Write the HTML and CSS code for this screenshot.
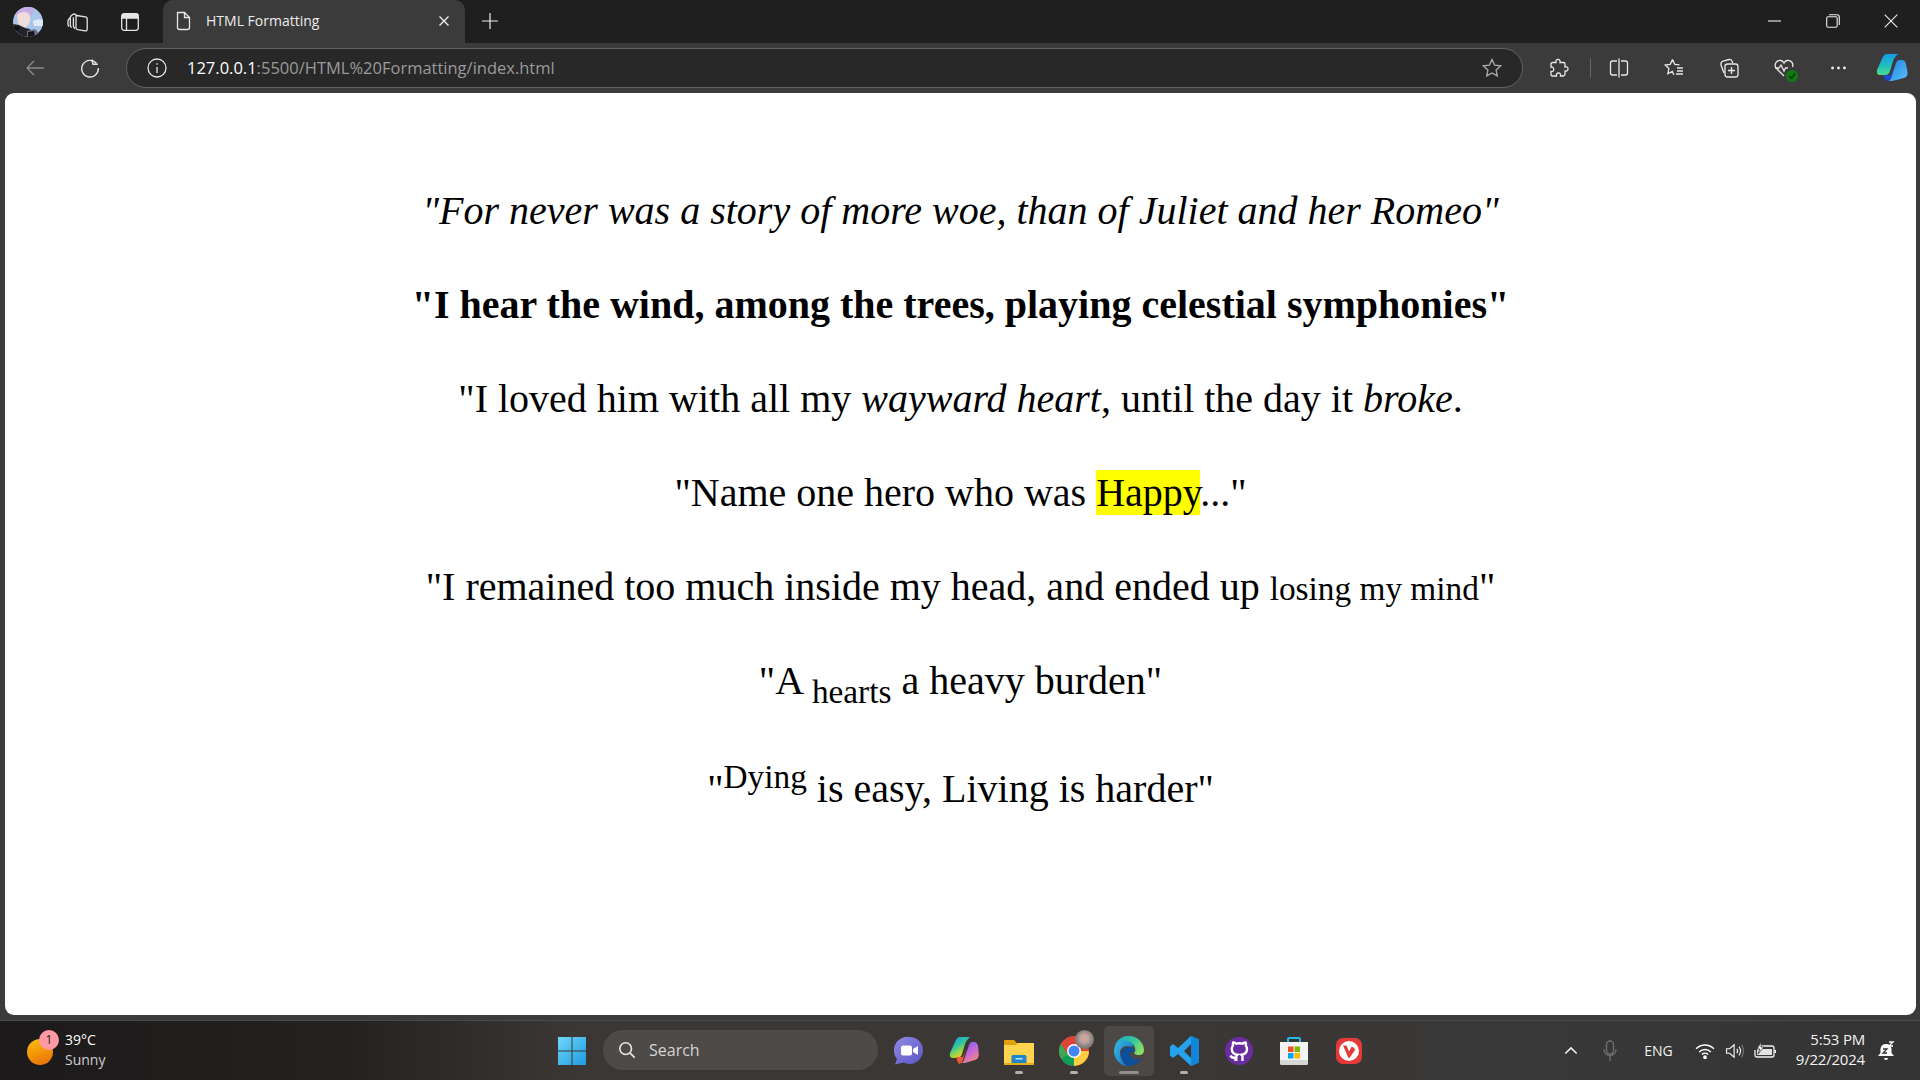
FILE: index.html
```html
<!DOCTYPE html>
<html lang="en">
<head>
<meta charset="utf-8">
<title>HTML Formatting</title>
<link rel="stylesheet" href="styles.css">
</head>
<body>
<div class="window">
  <header class="tabbar">
    <svg class="avatar" viewBox="0 0 30 30"><defs><clipPath id="avc"><circle cx="15" cy="15" r="15"/></clipPath></defs><g clip-path="url(#avc)"><rect width="30" height="30" fill="#a9c6ea"/><path d="M0 0h22q-2 6-4 9H0z" fill="#c3aee6"/><path d="M4 8q5-5 11-2 3 3 2 8-1 5-5 6-5 0-7-4z" fill="#f0dcd9"/><path d="M20 14q5-3 10-1v6h-9z" fill="#dfeaf6"/><path d="M0 17l6 1 6 3 5 1 4 8H0z" fill="#23232c"/><path d="M0 19l7 1-1 3H0z" fill="#101015"/><path d="M14 24l8-2 8 8H14z" fill="#6a7486"/><path d="M15 25l6-1 1 6h-7z" fill="#15151b"/></g></svg>
    <svg viewBox="0 0 21 20" class="ico tb-first"><path d="M9.500 3.500l9 1.300q1.700.3 1.700 2V17q0 2-2 1.800l-7.500-1.100q-1.700-.3-1.700-2V5.200q0-1.900.5-1.700z"/><path d="M6.400 5.200V14q0 1.500 1.600 2.600M9.500 3.500L8 2.200Q6.800 1.700 5.700 2.600L4 4Q3.300 4.700 3.300 5.800V13q0 1.500 1.300 2.500M5.700 2.600"/><path d="M3.300 5.800L1.700 7.200Q1 7.900 1 9v3.500q0 1.300 1.200 2"/></svg>
    <svg viewBox="0 0 18 18" class="ico tb-second"><rect x=".7" y=".7" width="16.600" height="16.600" rx="2.500"/><path d="M5.500 5v12.300"/><path d="M1.500 1.500h15V5h-15z" fill="#e6e6e6"/></svg>
    <div class="tab">
      <svg viewBox="0 0 16 20" class="tab-page"><path d="M2.500 1.500h7l5 5v10q0 2-2 2h-8q-2 0-2-2v-13q0-2 0-2z"/><path d="M9.500 1.500v5h5"/></svg>
      <span class="tab-title">HTML Formatting</span>
      <svg viewBox="0 0 12 12" class="tab-x"><path d="M1.500 1.500l9 9M10.500 1.500l-9 9"/></svg>
    </div>
    <svg viewBox="0 0 16 16" class="tab-new"><path d="M8 0v16M0 8h16"/></svg>
    <div class="winctl">
      <svg viewBox="0 0 14 14" class="wc"><path d="M0 7h13"/></svg>
      <svg viewBox="0 0 14 14" class="wc"><rect x=".7" y="2.700" width="10.500" height="10.500" rx="1.500"/><path d="M3 .7h8q2.300 0 2.300 2.300v8"/></svg>
      <svg viewBox="0 0 14 14" class="wc"><path d="M.7.700l12.600 12.600M13.300.700L.7 13.300"/></svg>
    </div>
  </header>

  <nav class="toolbar">
    <svg viewBox="0 0 20 20" class="nav-ico nav-back"><path d="M19 10H2M9 3l-7 7 7 7"/></svg>
    <svg viewBox="0 0 20 20" class="nav-ico nav-reload"><path d="M16.500 5.500A8.300 8.300 0 1 0 18.300 10"/><path d="M12 1.500l1 4.800h4.800"/></svg>
    <div class="address">
      <svg viewBox="0 0 20 20" class="addr-info"><circle cx="10" cy="10" r="9"/><path d="M10 9v6M10 5.200v1.500"/></svg>
      <span class="url"><b>127.0.0.1</b>:5500/HTML%20Formatting/index.html</span>
      <svg viewBox="0 0 20 20" class="addr-star"><path d="M10 1.500l2.600 5.600 6 .7-4.500 4.100 1.200 6L10 15l-5.300 2.900 1.200-6L1.400 7.800l6-.7z"/></svg>
    </div>
    <div class="tools">
      <svg viewBox="0 0 20 20" class="tool tool-ext"><path d="M8 1.500q2.500-.7 3 1.500.2 1 0 1.500h3.500q1.500 0 1.500 1.500v3q1-.5 2 0 1.500 1 .7 3-.7 1.500-2.700 1v3q0 1.500-1.500 2h-3q.5-3-2-3t-2 3h-4Q2 18 2 16.500v-3q2.500.5 2.700-2T2 9V6q0-1.500 1.500-1.500H7q-.5-2.200 1-3z"/></svg>
      <span class="tool-sep"></span>
      <svg viewBox="0 0 20 20" class="tool"><path d="M8 3H3.500Q1.500 3 1.500 5v10q0 2 2 2H8M12 3h4.500q2 0 2 2v10q0 2-2 2H12M10 .5v19"/></svg>
      <svg viewBox="0 0 20 20" class="tool"><path d="M8.500 1.500l2.300 4.800 4.700.6M8.500 1.500L6.200 6.300l-5 .7 3.700 3.500-1 5.200 4.400-2.400 1.600 3.600M13 10h6M13 13h6M12 16h7"/></svg>
      <svg viewBox="0 0 20 20" class="tool"><path d="M5 15l-3-8Q1.500 4 4 3l6-1.500q2-.4 3 1.500l.8 2"/><rect x="6" y="6" width="13" height="13" rx="2.500"/><path d="M12.500 9v7M9 12.500h7"/></svg>
      <span class="tool-wrap"><svg viewBox="0 0 20 20" class="tool"><path d="M10 18L2.500 10.500Q0 7.500 2 4.500 4 1.800 7 2.500 9 3 10 5q1-2 3-2.500 3-.7 5 2 1.500 2 .5 4.500M1 10h4l2-3 3 6 1.500-3H14"/></svg><span class="health"><svg viewBox="0 0 10 10"><path d="M2.500 5l2 2 3-4"/></svg></span></span>
      <svg viewBox="0 0 20 6" class="tool tool-dots"><circle cx="3" cy="3" r="1.700"/><circle cx="10" cy="3" r="1.700"/><circle cx="17" cy="3" r="1.700"/></svg>
      <svg viewBox="0 0 32 30" class="copilot"><defs><linearGradient id="cp1" x1="0" y1="0" x2="0" y2="1"><stop offset="0" stop-color="#139ae8"/><stop offset=".55" stop-color="#1fbfc0"/><stop offset="1" stop-color="#4cdc8e"/></linearGradient><linearGradient id="cp2" x1="0" y1="0" x2="1" y2="1"><stop offset="0" stop-color="#1b7fe0"/><stop offset="1" stop-color="#5cc0f8"/></linearGradient></defs><path d="M11 1h11l-2 2q-2 2-3 5l-3 10q-1 4-5 4H4q-4 0-3-5L6 6q2-5 5-5z" fill="url(#cp1)"/><path d="M11 28q3 0 4-3l5-15q1-3 3-3h3q3 0 4 4l1.500 8q.5 5-3.500 6l-12 3z" fill="url(#cp2)"/><path d="M7 22h7q1.500 0 1-1l3-7-3 11q-1 3-4 3-3-2-4-6z" fill="#1f45cf"/></svg>
    </div>
  </nav>

  <main class="page">
    <p><i>"For never was a story of more woe, than of Juliet and her Romeo"</i></p>
    <p><b>"I hear the wind, among the trees, playing celestial symphonies"</b></p>
    <p>"I loved him with all my <em>wayward heart</em>, until the day it <em>broke</em>.</p>
    <p>"Name one hero who was <mark>Happy</mark>..."</p>
    <p>"I remained too much inside my head, and ended up <small>losing my mind</small>"</p>
    <p>"A <sub>hearts</sub> a heavy burden"</p>
    <p>"<sup>Dying</sup> is easy, Living is harder"</p>
  </main>

  <footer class="taskbar">
    <div class="tb-left">
      <span class="weather-ico"><span class="weather-badge">1</span></span>
      <div class="weather-text"><span class="temp">39°C</span><span class="cond">Sunny</span></div>
    </div>
    <div class="tb-center">
      <svg viewBox="0 0 30 30" class="start"><defs><linearGradient id="win" x1="0" y1="0" x2="1" y2="1"><stop offset="0" stop-color="#6fd6f7"/><stop offset="1" stop-color="#1f9be0"/></linearGradient></defs><path d="M1 1h13.500v13.500H1zM15.500 1H29v13.500H15.500zM1 15.500h13.500V29H1zM15.500 15.500H29V29H15.500z" fill="url(#win)"/></svg>
      <div class="search">
        <svg viewBox="0 0 20 20" class="search-ico"><circle cx="8.500" cy="8.500" r="6.500"/><path d="M13.500 13.500l5 5"/></svg>
        <span>Search</span>
      </div>
      <div class="apps">
        <span class="app"><svg viewBox="0 0 30 30"><defs><linearGradient id="teams" x1="0" y1="0" x2="1" y2="1"><stop offset="0" stop-color="#8f8ae6"/><stop offset="1" stop-color="#5a55c4"/></linearGradient></defs><path d="M15.500 1a13.500 13.500 0 1 1-6 25.600L1 28.500 3 23A13.500 13.500 0 0 1 15.500 1z" fill="url(#teams)"/><rect x="7" y="9.500" width="11" height="10" rx="2" fill="#fff"/><path d="M19 13l5-3v9l-5-3z" fill="#fff"/></svg></span>
        <span class="app"><svg viewBox="0 0 30 30"><defs><linearGradient id="cpa" x1="0" y1="0" x2=".6" y2="1"><stop offset="0" stop-color="#1e9be8"/><stop offset=".45" stop-color="#2cc4a4"/><stop offset=".75" stop-color="#a8d63c"/><stop offset="1" stop-color="#f6c12f"/></linearGradient><linearGradient id="cpb" x1=".2" y1="0" x2=".8" y2="1"><stop offset="0" stop-color="#6a5fe8"/><stop offset=".5" stop-color="#c468dc"/><stop offset="1" stop-color="#f68a6c"/></linearGradient></defs><path d="M11 1h10l-2 2q-2 2-3 5l-3 10q-1 4-5 4H4q-4 0-3-5L6 6q2-5 5-5z" fill="url(#cpa)"/><path d="M11 27q3 0 4-3l5-15q1-3 3-3h2q3 0 4 4l.8 8q.2 5-3.800 6l-10 3z" fill="url(#cpb)"/><path d="M7 21h6q1 0 1.500-1.500L17 13l-3 11q-1 3-4 4-2-3-3-7z" fill="#ee5a32"/></svg></span>
        <span class="app app-run"><svg viewBox="0 0 30 30"><path d="M0 5q0-1 1-1h9l3 3h17v4H0z" fill="#e0a10c"/><path d="M0 9h12l2-2h16v22H0z" fill="#ffd34e"/><path d="M9 19h12q1.500 0 1.500 1.500V27h-15v-6.500Q7.500 19 9 19z" fill="#1f86c9"/><path d="M11.500 22h7v1.500h-7z" fill="#bfe3f7"/><path d="M0 27h30v2H0z" fill="#e9ad1b"/></svg></span>
        <span class="app app-run"><svg viewBox="0 0 30 30"><circle cx="15" cy="15" r="15" fill="#db4437"/><path d="M15 15L2 22.500A15 15 0 0 0 15 30z" fill="#0f9d58"/><path d="M15 15v15A15 15 0 0 0 30 15z" fill="#ffcd40"/><path d="M2 7.500A15 15 0 0 0 2 22.500L9 19z" fill="#3aa757"/><circle cx="15" cy="15" r="7" fill="#fff"/><circle cx="15" cy="15" r="5.500" fill="#4285f4"/></svg><span class="chrome-profile"></span></span>
        <span class="app app-active"><svg viewBox="0 0 30 30"><defs><linearGradient id="ed" x1="0" y1="0" x2="1" y2="1"><stop offset="0" stop-color="#3cc0ea"/><stop offset="1" stop-color="#0f69b8"/></linearGradient><linearGradient id="ed2" x1="0" y1=".2" x2="1" y2=".6"><stop offset="0" stop-color="#1fa6c8"/><stop offset=".6" stop-color="#39c89a"/><stop offset="1" stop-color="#8fe05c"/></linearGradient></defs><path d="M0 15A15 15 0 0 1 15 0q8 8 2 11-8-3-11 4-1 8 7 15A15 15 0 0 1 0 15z" fill="url(#ed)"/><path d="M1 9Q5 0 15 0a15 15 0 0 1 15 14q0 5-5 5-4 0-5-2 2-2 1-5C18 2 5 3 1 9z" fill="url(#ed2)"/><path d="M13 30q-7-5-6-13 2-6 8-6 5 0 6 5-3-1-5 .5-2 3 3 6 5 2 9 0-6 8-15 7.500z" fill="#0d4f9a"/></svg></span>
        <span class="app app-run"><svg viewBox="0 0 30 30"><path d="M22 0l8 3.500v23L22 30 9 18l-5 4-3-2.500v-9L4 8l5 4zM22 8l-7 7 7 7z" fill="#25a2ee"/><path d="M22 0l8 3.500v23L22 30z" fill="#1186d8"/></svg></span>
        <span class="app"><svg viewBox="0 0 30 30"><circle cx="15" cy="15" r="14" fill="#6a2d9f"/><path d="M11.500 25v-3.500q-4 .8-5-2M18.500 25v-4q0-1.500-1-2.300c3-.4 5.500-1.800 5.500-6 0-1.300-.5-2.300-1.200-3.200.2-.9.200-2-.2-3-1.200 0-2.300.6-3.200 1.200a11 11 0 0 0-6 0c-.9-.6-2-1.200-3.200-1.200-.4 1-.4 2.100-.2 3-.7.900-1.200 1.900-1.200 3.200 0 4.200 2.500 5.600 5.500 6-1 .8-1 1.800-1 2.300V25" fill="none" stroke="#fff" stroke-width="2.400"/></svg></span>
        <span class="app"><svg viewBox="0 0 30 30"><path d="M9 8V3q0-1 1-1h10q1 0 1 1v5" fill="none" stroke="#25b8e8" stroke-width="2"/><path d="M1 6h28v21q0 2-2 2H3q-2 0-2-2z" fill="#f3f3f3"/><path d="M1 24h28v3q0 2-2 2H3q-2 0-2-2z" fill="#d6d6d6"/><rect x="9" y="10.500" width="5.500" height="5.500" fill="#f25022"/><rect x="15.500" y="10.500" width="5.500" height="5.500" fill="#7fba00"/><rect x="9" y="17" width="5.500" height="5.500" fill="#00a4ef"/><rect x="15.500" y="17" width="5.500" height="5.500" fill="#ffb900"/></svg></span>
        <span class="app"><svg viewBox="0 0 30 30"><rect x="2" y="2" width="26" height="26" rx="7" fill="#e53a3a"/><circle cx="15" cy="15" r="10" fill="#fff"/><path d="M9 9.500h3.500l2.500 6 2.500-4.500a3 3 0 0 1 3.500 3L15.500 22h-1z" fill="#e53a3a"/></svg></span>
      </div>
    </div>
    <div class="tb-right">
      <svg viewBox="0 0 16 10" class="tray-chev"><path d="M1.500 8.500L8 2l6.500 6.500"/></svg>
      <svg viewBox="0 0 14 22" class="tray-mic"><rect x="3.500" y="1" width="7" height="13" rx="3.500"/><path d="M1 9.500a6 6 0 0 0 12 0M7 16v5"/></svg>
      <span class="tray-lang">ENG</span>
      <svg viewBox="0 0 22 18" class="tray-wifi"><path d="M1 6.500a14 14 0 0 1 20 0M4.500 10a9 9 0 0 1 13 0M7.500 13a5 5 0 0 1 7 0"/><circle cx="11" cy="16" r="1.300" fill="#fff"/></svg>
      <svg viewBox="0 0 22 18" class="tray-vol"><path d="M1.500 6.500h3.500L10 2v14l-5-4.500H1.500zM13 6.500q2 2.500 0 5M15.500 4q3.500 5 0 10"/><path d="M18.500 2q4 7 0 14" stroke="#777"/></svg>
      <svg viewBox="0 0 22 18" class="tray-bat"><path d="M7 4h11q2 0 2 2v7q0 2-2 2H3q-2 0-2-2V8M21.500 8v3"/><rect x="3" y="7" width="15" height="6" fill="#e2e2e2" stroke="none"/><path d="M7 0L3 7h3L4 12l6-7H7z" fill="#fff" stroke="#333" stroke-width=".8"/></svg>
      <div class="clock"><span>5:53 PM</span><span>9/22/2024</span></div>
      <svg viewBox="0 0 18 20" class="tray-bell"><path d="M9 3q5 0 5.500 5v4l2.500 3H1l2.500-3V8Q4 3 9 3zM7 17h4q0 2-2 2t-2-2z" fill="#fff"/><path d="M6 8h4l-4 4h4" fill="none" stroke="#333" stroke-width="1.300"/><path d="M12 1h4l-4 4h4" fill="none" stroke="#fff" stroke-width="1.300"/></svg>
    </div>
  </footer>
</div>
</body>
</html>
```

FILE: styles.css
```css
* { box-sizing: border-box; }
html, body { margin: 0; padding: 0; height: 100%; overflow: hidden; }
body { font-family: "Open Sans", "Noto Sans", sans-serif; background: #3b3b3b; }
svg { display: block; flex: none; }
.window { display: flex; flex-direction: column; height: 1080px; }

/* Tab strip */
.tabbar { height: 43px; background: #1f1f1f; display: flex; align-items: center; padding-left: 13px; flex: none; }
.avatar { width: 30px; height: 30px; }
.ico { fill: none; stroke: #e6e6e6; stroke-width: 1.300; }
.tb-first { width: 21px; height: 20px; margin-left: 24px; }
.tb-second { width: 18px; height: 18px; margin-left: 33px; }
.tab { width: 302px; height: 43px; margin-left: 24px; align-self: flex-end; background: #3b3b3b; border-radius: 10px 10px 0 0; display: flex; align-items: center; padding: 0 15px 2px 12px; }
.tab-page { width: 16px; height: 20px; fill: none; stroke: #e8e8e8; stroke-width: 1.300; }
.tab-title { color: #ececec; font-size: 14px; margin-left: 15px; flex: 1; }
.tab-x { width: 12px; height: 12px; fill: none; stroke: #f0f0f0; stroke-width: 1.300; }
.tab-new { width: 16px; height: 16px; fill: none; stroke: #eee; stroke-width: 1.200; margin-left: 17px; margin-bottom: 1px; }
.winctl { margin-left: auto; display: flex; gap: 44px; padding-right: 22px; margin-bottom: 1px; }
.wc { width: 14px; height: 14px; fill: none; stroke: #eee; stroke-width: 1.100; }

/* Toolbar */
.toolbar { height: 50px; background: #3b3b3b; display: flex; align-items: center; flex: none; padding-left: 25px; }
.nav-ico { width: 20px; height: 20px; fill: none; stroke-width: 1.400; }
.nav-back { stroke: #8b8b8b; }
.nav-reload { stroke: #e6e6e6; margin-left: 35px; }
.address { width: 1397px; height: 40px; margin-left: 26px; margin-top: -1px; border: 1.500px solid #626262; border-radius: 20px; background: #282828; display: flex; align-items: center; padding: 0 20px; }
.addr-info { width: 20px; height: 20px; fill: none; stroke: #e6e6e6; stroke-width: 1.300; }
.url { flex: 1; margin-left: 20px; font-size: 16.500px; color: #9a9a9a; }
.url b { font-weight: 400; color: #fff; }
.addr-star { width: 20px; height: 20px; fill: none; stroke: #aaa; stroke-width: 1.300; }
.tools { display: flex; align-items: center; padding-left: 26px; }
.tool { width: 20px; height: 20px; fill: none; stroke: #e8e8e8; stroke-width: 1.300; }
.tools > .tool { margin-right: 35px; }
.tools > .tool-ext { margin-right: 0; }
.tool-sep { width: 1px; height: 20px; background: #666; margin: 0 18px 0 21px; }
.tool-wrap { position: relative; margin-right: 36px; }
.health { position: absolute; right: -4px; bottom: -4px; width: 12px; height: 12px; border-radius: 50%; background: #107c10; }
.health svg { width: 12px; height: 12px; fill: none; stroke: #0b3d0b; stroke-width: 1.500; }
.tools > .tool-dots { width: 17px; height: 6px; fill: #e8e8e8; stroke: none; margin-right: 29px; }
.copilot { width: 32px; height: 30px; }

/* Page */
.page { flex: 1; margin: 0 4px 0 5px; background: #fff; border-radius: 9px; padding: 94px 0 0; font-family: "Liberation Serif", "Times New Roman", serif; font-size: 40px; color: #000; text-align: center; overflow: hidden; }
.page p { margin: 0 0 47px; }
.page mark { background: #ff0; color: #000; }

/* Taskbar */
.taskbar { height: 60px; margin-top: 5px; flex: none; border-top: 1px solid #4a4a4a; background: linear-gradient(90deg, #1c1a1a 0, #242120 18%, #3b3734 30%, #3a3734 60%, #383838 80%, #343434 100%); display: flex; align-items: center; color: #fff; }
.tb-left { width: 556px; display: flex; align-items: center; padding-left: 27px; flex: none; }
.weather-ico { position: relative; width: 26px; height: 26px; border-radius: 50%; background: linear-gradient(160deg, #fdc10a, #e86a06); margin-top: 2px; }
.weather-badge { position: absolute; top: -9px; left: 12px; width: 20px; height: 20px; border-radius: 50%; background: #ff99a4; color: #1a1a1a; font-size: 12px; line-height: 20px; text-align: center; }
.weather-text { display: flex; flex-direction: column; margin: -2px 0 0 12px; font-size: 14px; line-height: 20px; }
.temp { color: #fff; }
.cond { color: #cfcfcf; }
.tb-center { display: flex; align-items: center; flex: none; }
.start { width: 30px; height: 30px; margin-left: 1px; }
.search { width: 275px; height: 40px; margin-left: 16px; margin-top: -1px; border-radius: 20px; background: #4d4a48; display: flex; align-items: center; padding-left: 15px; font-size: 16px; color: #d4d4d4; }
.search-ico { width: 18px; height: 18px; fill: none; stroke: #e8e8e8; stroke-width: 1.800; margin-right: 13px; }
.apps { display: flex; margin-left: 3px; }
.app { position: relative; width: 55px; height: 50px; display: flex; align-items: center; justify-content: center; isolation: isolate; }
.app svg { width: 30px; height: 30px; }
.app-run::after, .app-active::after { content: ""; position: absolute; bottom: 2px; left: 50%; transform: translateX(-50%); width: 8px; height: 3px; border-radius: 2px; background: #b0b0b0; }
.app-active::before { content: ""; position: absolute; inset: 0 2.500px; background: #4b4846; border-radius: 5px; z-index: -1; }
.app-active::after { width: 20px; background: #8e8e8e; }
.chrome-profile { position: absolute; top: 4px; right: 7px; width: 19px; height: 19px; border-radius: 50%; background: radial-gradient(circle at 50% 45%, #c9a69e 0 25%, #8a8583 55%, #5f5c5a 100%); }
.tb-right { margin-left: auto; display: flex; align-items: center; padding-right: 25px; }
.tray-chev { width: 14px; height: 9px; fill: none; stroke: #f2f2f2; stroke-width: 1.800; }
.tray-mic { width: 14px; height: 22px; fill: none; stroke: #6e6e6e; stroke-width: 1.400; margin-left: 25px; }
.tray-lang { font-size: 14px; color: #f0f0f0; margin-left: 27px; }
.tray-wifi { width: 20px; height: 16px; fill: none; stroke: #fff; stroke-width: 1.600; margin-left: 22px; }
.tray-vol { width: 20px; height: 16px; fill: none; stroke: #f2f2f2; stroke-width: 1.300; margin-left: 10px; }
.tray-bat { width: 22px; height: 18px; fill: none; stroke: #f2f2f2; stroke-width: 1.300; margin-left: 9px; }
.clock { display: flex; flex-direction: column; align-items: flex-end; font-size: 15px; line-height: 20px; color: #f2f2f2; margin: -4px 0 0 20px; letter-spacing: -.2px; }
.tray-bell { width: 18px; height: 20px; margin-left: 12px; }
```
